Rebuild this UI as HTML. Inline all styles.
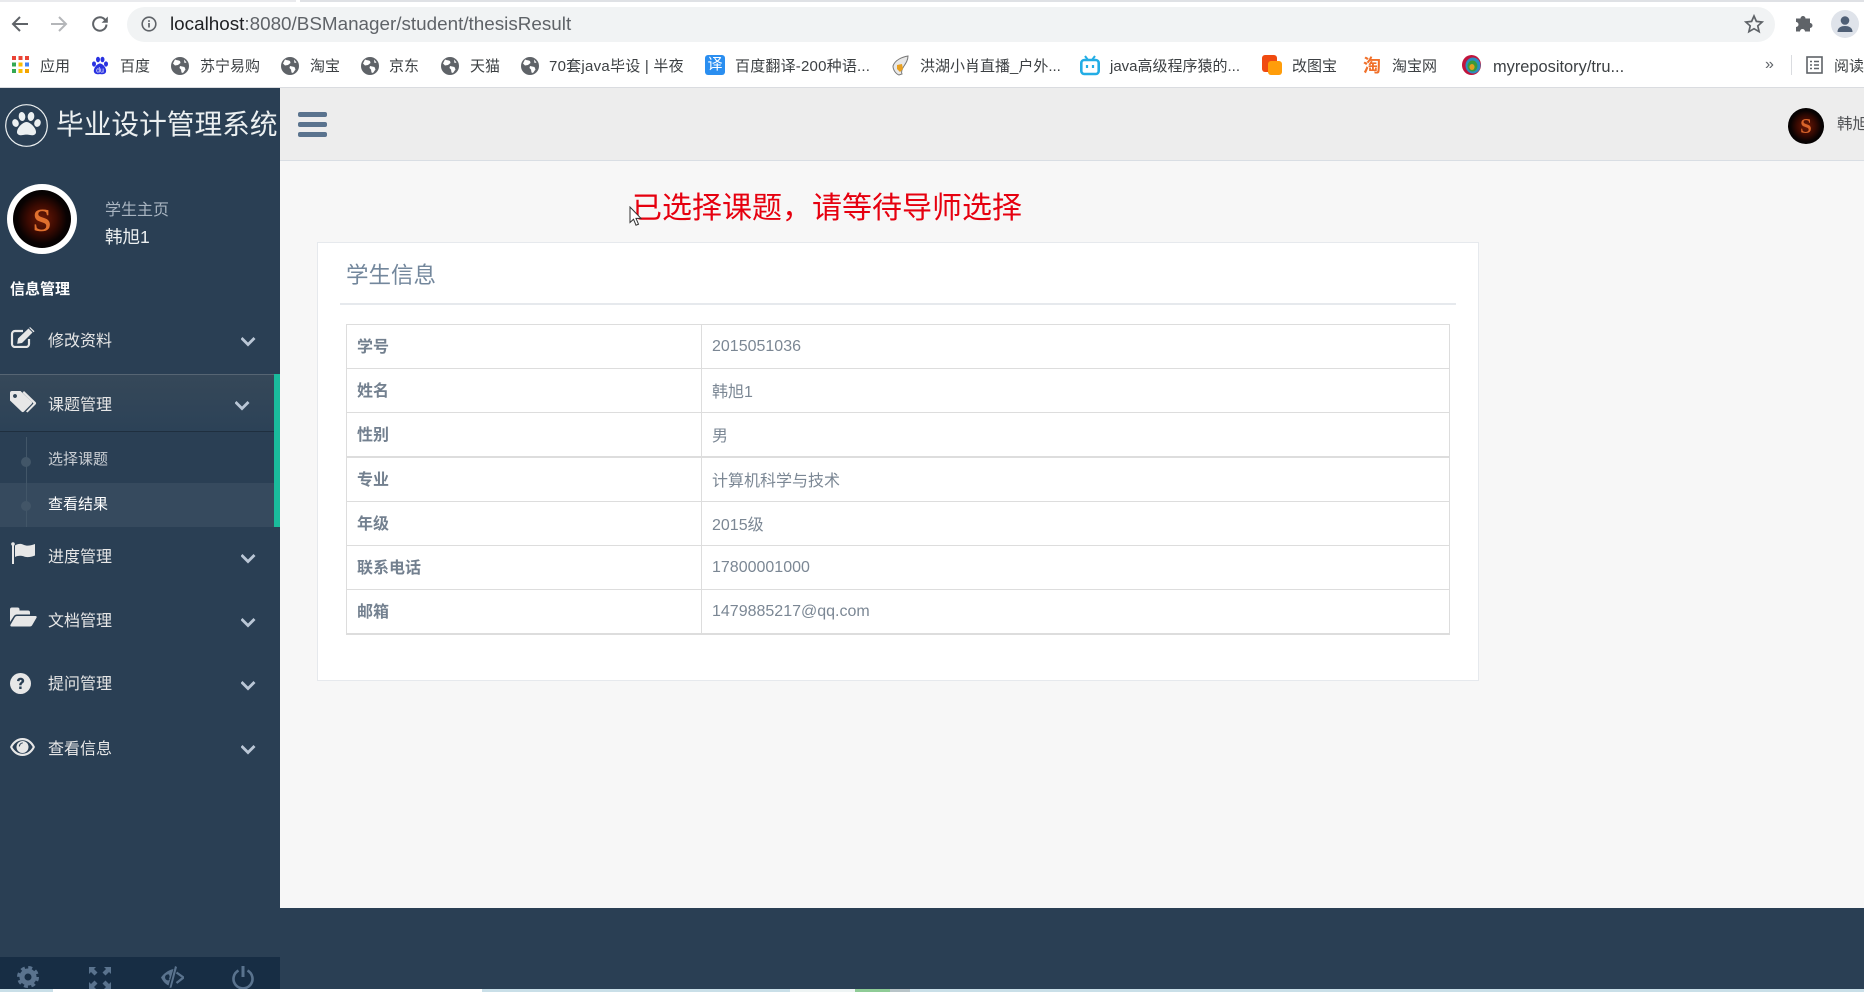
<!DOCTYPE html>
<html lang="zh"><head><meta charset="utf-8"><title>毕业设计管理系统</title>
<style>
html,body{margin:0;padding:0;width:1864px;height:992px;overflow:hidden;background:#fff}
body{position:relative;font-family:"Liberation Sans","Noto Sans CJK SC",sans-serif;color:#73879C}
.a,.t,svg{position:absolute}
.t{white-space:nowrap;line-height:24px;height:24px}
.bm{font-size:15px;color:#3c4043;top:55px}
.m{font-size:16px;color:#E7E7E7;left:48px}
svg{display:block}
table{position:absolute;left:346px;top:324px;width:1104px;height:310px;border-collapse:collapse;table-layout:fixed;font-size:16px;color:#7b8794}
td,th{border:1px solid #ddd;padding:0 0 0 10px;text-align:left;height:43px;font-weight:400}
th{font-weight:700;width:344px;padding-bottom:3px;height:40px;color:#73808f}
td.c{padding-bottom:2px;height:41px}
tr.k td,tr.k th{border-bottom:2px solid #ddd}
</style></head><body>

<!-- browser chrome -->
<div class="a" style="left:0;top:0;width:296px;height:2px;background:#e9eaed"></div>
<div class="a" style="left:300px;top:0;width:1564px;height:2px;background:#dfe1e5"></div>
<div class="a" style="left:127px;top:7px;width:1648px;height:35px;border-radius:18px;background:#f1f3f4"></div>
<div class="a" style="left:0;top:87px;width:1864px;height:1px;background:#dadce0"></div>
<svg style="left:10px;top:14px" width="20" height="20" viewBox="0 0 20 20"><path d="M18 10H3M10 3l-7 7 7 7" fill="none" stroke="#5f6368" stroke-width="2"/></svg>
<svg style="left:49px;top:14px" width="20" height="20" viewBox="0 0 20 20"><path d="M2 10h15M10 3l7 7-7 7" fill="none" stroke="#b4b6b9" stroke-width="2"/></svg>
<svg style="left:90px;top:14px" width="20" height="20" viewBox="0 0 20 20"><path d="M16.5 10.5a6.7 6.7 0 1 1-1.9-5.2L17 7.5" fill="none" stroke="#5f6368" stroke-width="2"/><path d="M17.8 2.5v6.2h-6.2z" fill="#5f6368"/></svg>
<svg style="left:141px;top:16px" width="16" height="16" viewBox="0 0 16 16"><circle cx="8" cy="8" r="6.8" fill="none" stroke="#5f6368" stroke-width="1.6"/><path d="M8 7v4.5M8 4.3v1.6" stroke="#5f6368" stroke-width="1.7"/></svg>
<div class="t" style="left:170px;top:12px;font-size:18.850px;color:#5f6368"><span style="color:#202124">localhost</span>:8080/BSManager/student/thesisResult</div>
<svg style="left:1744px;top:14px" width="20" height="20" viewBox="0 0 20 20"><path d="M10 2l2.4 5.4 5.8.6-4.4 3.9 1.3 5.8L10 14.7l-5.1 3 1.3-5.8L1.800 8l5.800-.6z" fill="none" stroke="#5f6368" stroke-width="1.700"/></svg>
<svg style="left:1794px;top:14px" width="20" height="20" viewBox="0 0 20 20"><path d="M2 6h4.500a2.500 2.500 0 1 1 5 0H16v4.500a2.500 2.500 0 1 1 0 5V19H11a2.500 2.500 0 1 0-5 0H2v-4.500a2.500 2.500 0 1 0 0-5z" transform="translate(0 -1.500)" fill="#5f6368"/></svg>
<svg style="left:1831px;top:10px" width="28" height="28" viewBox="0 0 28 28"><circle cx="14" cy="14" r="14" fill="#dfe3ea"/><circle cx="14" cy="10.500" r="4.300" fill="#4f5f75"/><path d="M6.500 22c0-4.500 3.500-6 7.500-6s7.500 1.500 7.500 6z" fill="#4f5f75"/></svg>

<!-- bookmarks -->
<svg style="left:12px;top:56px" width="17" height="17" viewBox="0 0 17 17"><g><rect x="0" y="0" width="4" height="4" fill="#ea4335"/><rect x="6.500" y="0" width="4" height="4" fill="#ea4335"/><rect x="13" y="0" width="4" height="4" fill="#ea4335"/><rect x="0" y="6.500" width="4" height="4" fill="#34a853"/><rect x="6.500" y="6.500" width="4" height="4" fill="#fbbc04"/><rect x="13" y="6.500" width="4" height="4" fill="#4285f4"/><rect x="0" y="13" width="4" height="4" fill="#34a853"/><rect x="6.500" y="13" width="4" height="4" fill="#fbbc04"/><rect x="13" y="13" width="4" height="4" fill="#f4a400"/></g></svg>
<div class="t bm" style="left:40px">应用</div>
<svg style="left:91px;top:56px" width="18" height="19" viewBox="0 0 18 19"><g fill="#2932e1"><ellipse cx="3" cy="8" rx="2" ry="2.600"/><ellipse cx="7" cy="3.500" rx="2" ry="2.800"/><ellipse cx="11.500" cy="3.500" rx="2" ry="2.800"/><ellipse cx="15" cy="8" rx="2" ry="2.600"/><path d="M9 7.500c3 0 7 5 6 8.500-1 2.500-4 2.500-6 2-2 .5-5 .5-6-2-1-3.500 3-8.500 6-8.500z"/></g><text x="9" y="16.500" font-size="7" fill="#fff" text-anchor="middle" font-family="Liberation Sans,sans-serif">du</text></svg>
<div class="t bm" style="left:120px">百度</div>
<svg width="0" height="0"><defs><g id="gl"><circle cx="9" cy="9" r="9" fill="#5f6368"/><path d="M4 2.500c2 1 3.500.5 5 1.500l.5 2-2.500 2-3 .5-2-2zM9 9l4.500 1 1 2.500-2.500 3.500-1.500-.5-.5-3-1.500-1.500zM13 2.500l2.500 3-2 .5z" fill="#fff"/></g></defs></svg>
<svg style="left:171px;top:57px" width="18" height="18"><use href="#gl"/></svg>
<div class="t bm" style="left:200px">苏宁易购</div>
<svg style="left:281px;top:57px" width="18" height="18"><use href="#gl"/></svg>
<div class="t bm" style="left:310px">淘宝</div>
<svg style="left:361px;top:57px" width="18" height="18"><use href="#gl"/></svg>
<div class="t bm" style="left:389px">京东</div>
<svg style="left:441px;top:57px" width="18" height="18"><use href="#gl"/></svg>
<div class="t bm" style="left:470px">天猫</div>
<svg style="left:521px;top:57px" width="18" height="18"><use href="#gl"/></svg>
<div class="t bm" style="left:549px;letter-spacing:.25px">70套java毕设 | 半夜</div>
<div class="a" style="left:705px;top:55px;width:20px;height:20px;border-radius:3px;background:#2a8ef0;color:#fff;font-size:15px;line-height:20px;text-align:center">译</div>
<div class="t bm" style="left:735px;letter-spacing:.2px">百度翻译-200种语...</div>
<svg style="left:891px;top:55px" width="20" height="21" viewBox="0 0 20 21"><path d="M17 1C11 2 4 5 2 11c0 4 3 8 6 9l3-1c-1-2 0-5 2-8 2-3 4-6 4-10z" fill="#e8e8e8" stroke="#777" stroke-width="1"/><path d="M6 10l5-1 1 5-3 3-3-3z" fill="#e8a020"/></svg>
<div class="t bm" style="left:920px">洪湖小肖直播_户外...</div>
<svg style="left:1080px;top:55px" width="20" height="21" viewBox="0 0 20 21"><rect x="1.300" y="5" width="17.400" height="14" rx="3" fill="none" stroke="#23ade5" stroke-width="2.600"/><path d="M5 1l3 4M15 1l-3 4" stroke="#23ade5" stroke-width="2"/><path d="M7 10v3M13 10v3" stroke="#23ade5" stroke-width="2.200"/></svg>
<div class="t bm" style="left:1110px">java高级程序猿的...</div>
<div class="a" style="left:1262px;top:55px;width:15px;height:17px;border-radius:3px;background:#f04a10"></div>
<div class="a" style="left:1268px;top:61px;width:14px;height:14px;border-radius:3px;background:#ff9d0a"></div>
<div class="t bm" style="left:1292px">改图宝</div>
<div class="t" style="left:1363px;top:54px;font-size:18px;font-weight:700;color:#f0702a">淘</div>
<div class="t bm" style="left:1392px">淘宝网</div>
<svg style="left:1462px;top:55px" width="19" height="20" viewBox="0 0 19 20"><ellipse cx="9.500" cy="10" rx="9.500" ry="10" fill="#c0143c"/><ellipse cx="11" cy="10.500" rx="7.500" ry="8" fill="#2a8ec0"/><ellipse cx="10.500" cy="11" rx="5" ry="5.500" fill="#3a9a3a"/><ellipse cx="10" cy="12" rx="2.600" ry="3" fill="#e0a020"/></svg>
<div class="t bm" style="left:1493px;font-size:16.400px">myrepository/tru...</div>
<div class="t" style="left:1765px;top:53px;font-size:16px;color:#5f6368">»</div>
<div class="a" style="left:1791px;top:55px;width:1px;height:20px;background:#dadce0"></div>
<svg style="left:1806px;top:56px" width="17" height="18" viewBox="0 0 17 18"><rect x="1" y="1" width="15" height="16" fill="none" stroke="#5f6368" stroke-width="1.600"/><path d="M4 5.500h2M4 9h2M4 12.500h2M8 5.500h5M8 9h5M8 12.500h5" stroke="#5f6368" stroke-width="1.400"/></svg>
<div class="t bm" style="left:1834px">阅读</div>

<!-- page background -->
<div class="a" style="left:280px;top:88px;width:1584px;height:820px;background:#F7F7F7"></div>
<div class="a" style="left:280px;top:88px;width:1584px;height:72px;background:#EDEDED;border-bottom:1px solid #D9DEE4"></div>
<div class="a" style="left:0;top:88px;width:280px;height:901px;background:#2A3F54"></div>
<div class="a" style="left:280px;top:908px;width:1584px;height:81px;background:#2A3F54"></div>
<div class="a" style="left:0;top:989px;width:1864px;height:3px;background:#c9dfe8"></div>
<div class="a" style="left:53px;top:989px;width:429px;height:3px;background:#fff"></div>
<div class="a" style="left:790px;top:989px;width:65px;height:3px;background:#eef4f4"></div>
<div class="a" style="left:855px;top:989px;width:35px;height:3px;background:#8ecb96"></div>
<div class="a" style="left:890px;top:989px;width:20px;height:3px;background:#b8c4c8"></div>

<!-- logo -->
<svg style="left:5px;top:104px" width="43" height="43" viewBox="0 0 43 43"><circle cx="21.500" cy="21.500" r="20.800" fill="none" stroke="#ECF0F1" stroke-width="1.200"/><g fill="#ECF0F1"><ellipse cx="10.500" cy="19" rx="3.200" ry="4" transform="rotate(-20 10.500 19)"/><ellipse cx="17" cy="12.500" rx="3.300" ry="4.500" transform="rotate(-8 17 12.500)"/><ellipse cx="26" cy="12.500" rx="3.300" ry="4.500" transform="rotate(8 26 12.500)"/><ellipse cx="32.500" cy="19" rx="3.200" ry="4" transform="rotate(20 32.500 19)"/><path d="M21.500 18c4 0 10 6.500 9.500 10.500-.5 3-4 3-6 2.500-2-.5-5-.5-7 0-2 .5-5.500.5-6-2.500C11.500 24.500 17.500 18 21.500 18z"/></g></svg>
<div class="t" style="left:56px;top:107px;height:36px;line-height:36px;font-size:27.700px;color:#ECF0F1">毕业设计管理系统</div>

<!-- hamburger -->
<div class="a" style="left:298px;top:112px;width:29px;height:5px;border-radius:2px;background:#5A738E"></div>
<div class="a" style="left:298px;top:122px;width:29px;height:5px;border-radius:2px;background:#5A738E"></div>
<div class="a" style="left:298px;top:132px;width:29px;height:5px;border-radius:2px;background:#5A738E"></div>

<!-- avatar defs -->
<svg width="0" height="0"><defs><radialGradient id="fg"><stop offset="0" stop-color="#6e1a06"/><stop offset=".5" stop-color="#3a0a02"/><stop offset=".85" stop-color="#090202"/><stop offset="1" stop-color="#040101"/></radialGradient></defs></svg>
<svg style="left:1788px;top:108px" width="36" height="36" viewBox="0 0 36 36"><circle cx="18" cy="18" r="18" fill="url(#fg)"/><text x="18" y="25" font-size="21" font-weight="700" fill="#d8642a" text-anchor="middle" font-family="Liberation Serif,serif">S</text></svg>
<div class="t" style="left:1837px;top:113px;font-size:15.500px;color:#515356">韩旭1</div>

<!-- profile -->
<div class="a" style="left:7px;top:184px;width:70px;height:70px;border-radius:50%;background:#fff"></div>
<svg style="left:13px;top:190px" width="58" height="58" viewBox="0 0 58 58"><circle cx="29" cy="29" r="29" fill="url(#fg)"/><text x="29" y="41" font-size="33" font-weight="700" fill="#e0702e" text-anchor="middle" font-family="Liberation Serif,serif">S</text></svg>
<div class="t" style="left:105px;top:199px;font-size:16px;color:#A9B5C1">学生主页</div>
<div class="t" style="left:105px;top:225px;font-size:17.500px;color:#ECF0F1">韩旭1</div>
<div class="t" style="left:10px;top:278px;font-size:15px;font-weight:700;color:#fff">信息管理</div>

<!-- menu -->
<svg width="0" height="0"><defs><path id="cv" d="M1.500 3L7 8.500 12.500 3l2 2L7 12.500-.5 5z" fill="#BAC7D6"/></defs></svg>
<svg style="left:10px;top:327px" width="25" height="21" viewBox="0 0 25 21"><path d="M13 4H5a3 3 0 0 0-3 3v10a3 3 0 0 0 3 3h11a3 3 0 0 0 3-3v-5" fill="none" stroke="#E7E7E7" stroke-width="2.200"/><path d="M8 11.500L18.500 1.500l4 4L12 16l-4.800.8zM20 0l4.500 4.200-1 1-4.200-4.300z" fill="#E7E7E7"/></svg>
<div class="t m" style="top:330px">修改资料</div>
<svg style="left:241px;top:334px" width="15" height="15"><use href="#cv"/></svg>

<div class="a" style="left:0;top:374px;width:274px;height:57px;background:linear-gradient(#364859,#2C4257);box-shadow:inset 0 1px 0 rgba(255,255,255,.16),0 1px 0 rgba(0,0,0,.25)"></div>
<div class="a" style="left:0;top:483px;width:274px;height:44px;background:rgba(255,255,255,.06)"></div>
<div class="a" style="left:274px;top:374px;width:6px;height:153px;background:#1ABB9C"></div>
<div class="a" style="left:26px;top:437px;width:1px;height:90px;background:#425668"></div>
<div class="a" style="left:21px;top:457px;width:10px;height:10px;border-radius:50%;background:#425668"></div>
<div class="a" style="left:21px;top:501px;width:10px;height:10px;border-radius:50%;background:#425567"></div>

<svg style="left:10px;top:391px" width="27" height="22" viewBox="0 0 27 22"><path d="M2 0h8.500l11 10.500a1.800 1.800 0 0 1 0 2.500L14 20.500a1.800 1.800 0 0 1-2.500 0L0 9.500V2a2 2 0 0 1 2-2zM5 3a2 2 0 1 0 .01 0z" fill="#E7E7E7" fill-rule="evenodd"/><path d="M14 0l11.500 11a1.800 1.800 0 0 1 0 2.500L17.500 21.500l-1.500-1 7.500-8L12.500 1.800z" fill="#E7E7E7"/></svg>
<div class="t m" style="top:392px;margin-top:2px">课题管理</div>
<svg style="left:235px;top:398px" width="15" height="15"><use href="#cv"/></svg>
<div class="t" style="left:48px;top:448px;font-size:15px;color:rgba(255,255,255,.75)">选择课题</div>
<div class="t" style="left:48px;top:493px;font-size:15px;color:#fff">查看结果</div>

<svg style="left:11px;top:542px" width="25" height="22" viewBox="0 0 25 22"><path d="M1 2v20h2V2z" fill="#E7E7E7"/><circle cx="2" cy="2" r="1.800" fill="#E7E7E7"/><path d="M4 3.500c3-2 6-2 8.500-.8 3 1.300 6 1.300 11.500-.7v11.500c-5 2-9 2-11.500.8C10 13.500 7 13.500 4 15z" fill="#E7E7E7"/></svg>
<div class="t m" style="top:546px">进度管理</div>
<svg style="left:241px;top:551px" width="15" height="15"><use href="#cv"/></svg>

<svg style="left:10px;top:607px" width="27" height="20" viewBox="0 0 27 20"><path d="M0 15V2.500A2 2 0 0 1 2 .5h5.500a2 2 0 0 1 2 2v1H18a2 2 0 0 1 2 2V7.500H7a4 4 0 0 0-3.400 2z" fill="#E7E7E7"/><path d="M7 9h18.500c1 0 1.500.9 1 1.800L22 18.500a2.500 2.500 0 0 1-2 1H1.500c-1 0-1.500-.9-1-1.800L5 10a2.500 2.500 0 0 1 2-1z" fill="#E7E7E7"/></svg>
<div class="t m" style="top:610px">文档管理</div>
<svg style="left:241px;top:615px" width="15" height="15"><use href="#cv"/></svg>

<svg style="left:10px;top:673px" width="21" height="21" viewBox="0 0 21 21"><circle cx="10.500" cy="10.500" r="10.500" fill="#E7E7E7"/><path d="M7 8c0-2 1.500-3.300 3.600-3.300S14.200 6 14.200 7.800c0 2.400-2.600 2.500-2.600 4.400H9.200c0-3 2.400-3 2.400-4.300 0-.7-.4-1-1-1-.7 0-1.100.5-1.200 1.300zM9.200 13.500h2.400V16H9.200z" fill="#2A3F54"/></svg>
<div class="t m" style="top:673px">提问管理</div>
<svg style="left:241px;top:678px" width="15" height="15"><use href="#cv"/></svg>

<svg style="left:10px;top:738px" width="25" height="18" viewBox="0 0 25 18"><path d="M12.500 0C18 0 22.500 3.500 25 9c-2.500 5.500-7 9-12.500 9S2.500 14.500 0 9C2.500 3.500 7 0 12.500 0zm0 2.200C8 2.200 4.500 5 2.300 9c2.200 4 5.700 6.800 10.200 6.800S20.500 13 22.700 9C20.500 5 17 2.200 12.500 2.200z" fill="#E7E7E7" fill-rule="evenodd"/><circle cx="12.500" cy="9" r="6" fill="#E7E7E7"/><path d="M8.800 8a4 4 0 0 1 3.700-3.500c.6 0 .6.800 0 .9A3 3 0 0 0 10 8c-.1.700-1.200.6-1.200 0z" fill="#2A3F54"/></svg>
<div class="t m" style="top:738px">查看信息</div>
<svg style="left:241px;top:742px" width="15" height="15"><use href="#cv"/></svg>

<!-- sidebar footer -->
<div class="a" style="left:0;top:957px;width:280px;height:32px;background:#172D44"></div>
<svg style="left:17px;top:966px" width="22" height="22" viewBox="0 0 22 22"><circle cx="11" cy="11" r="6" fill="none" stroke="#5A738E" stroke-width="5"/><circle cx="11" cy="11" r="9.300" fill="none" stroke="#5A738E" stroke-width="3.400" stroke-dasharray="3.900 3.400"/></svg>
<svg style="left:89px;top:967px" width="22" height="22" viewBox="0 0 22 22"><path d="M0 0h7L5 2l3.500 3.500L5.500 8.500 2 5 0 7zM22 0v7l-2-2-3.500 3.500-3-3L17 2l-2-2zM0 22v-7l2 2 3.500-3.500 3 3L5 20l2 2zM22 22h-7l2-2-3.500-3.500 3-3L20 17l2-2z" fill="#5A738E"/></svg>
<svg style="left:160px;top:966px" width="24" height="23" viewBox="0 0 24 23"><path d="M15 0L9.500 22l2-.5L17 1zM1 11.500c2-3 6-7 12.500-8.500L8.500 19.500C5 18 2.500 14.500 1 11.500z" fill="#5A738E"/><path d="M9 8.500a3 3 0 1 0 1.500 4.500z" fill="#172D44"/><path d="M10.500 10.500l-1 3" stroke="#5A738E" stroke-width="1.400"/><path d="M16.500 6.500l7 5-7 5.500" fill="none" stroke="#5A738E" stroke-width="2.300"/></svg>
<svg style="left:232px;top:966px" width="22" height="23" viewBox="0 0 22 23"><path d="M6.500 4.500a9.500 9.500 0 1 0 9 0" fill="none" stroke="#5A738E" stroke-width="2.600"/><path d="M11 0v11" stroke="#5A738E" stroke-width="3"/></svg>

<!-- content -->
<div class="t" style="left:632px;top:189px;height:40px;line-height:40px;font-size:30px;color:#e6000f">已选择课题，请等待导师选择</div>
<svg style="left:629px;top:206px" width="13" height="21" viewBox="0 0 13 21"><path d="M1 1v15.500l3.500-3.300 2.500 6 2.500-1-2.500-5.800 5 0z" fill="#fff" stroke="#333" stroke-width="1"/></svg>

<div class="a" style="left:317px;top:242px;width:1160px;height:437px;background:#fff;border:1px solid #E6E9ED"></div>
<div class="t" style="left:346px;top:260px;height:32px;line-height:32px;font-size:22.500px;color:#73879C">学生信息</div>
<div class="a" style="left:340px;top:303px;width:1116px;height:2px;background:#E6E9ED"></div>

<table>
<tr><th>学号</th><td>2015051036</td></tr>
<tr><th>姓名</th><td class="c">韩旭1</td></tr>
<tr class="k"><th>性别</th><td class="c">男</td></tr>
<tr><th>专业</th><td class="c">计算机科学与技术</td></tr>
<tr><th>年级</th><td class="c">2015级</td></tr>
<tr><th>联系电话</th><td>17800001000</td></tr>
<tr class="k"><th>邮箱</th><td>1479885217@qq.com</td></tr>
</table>

</body></html>
